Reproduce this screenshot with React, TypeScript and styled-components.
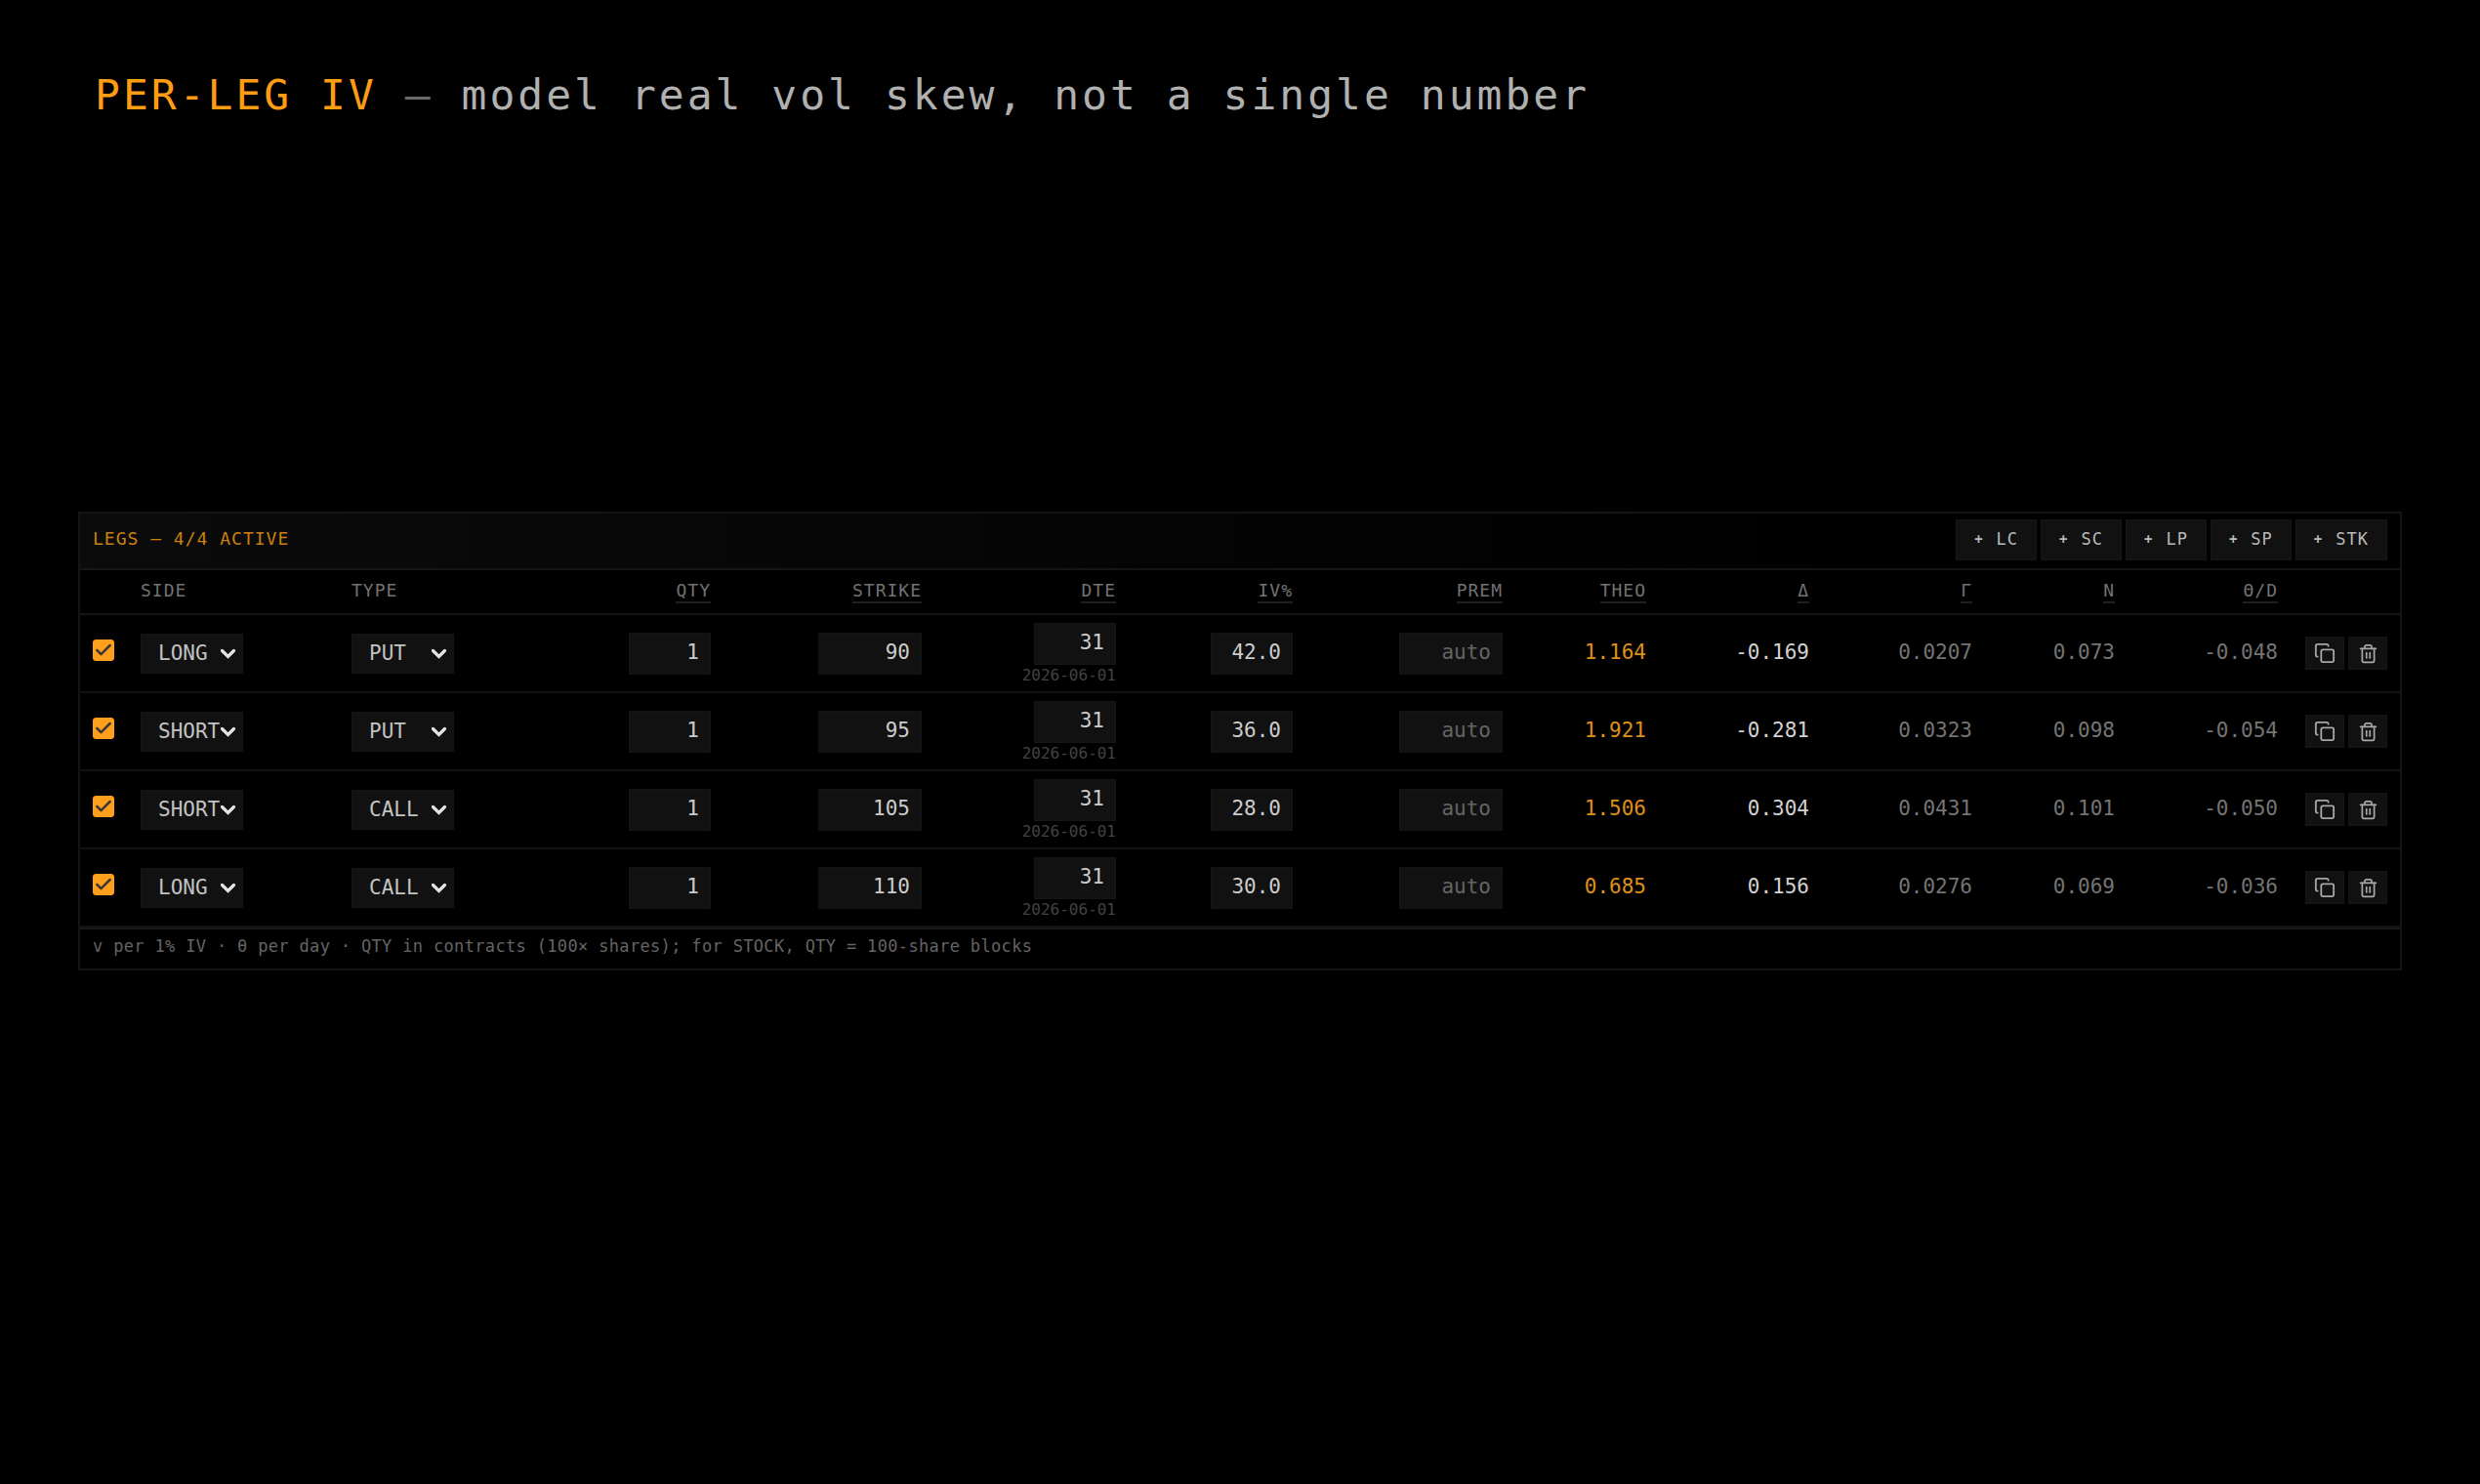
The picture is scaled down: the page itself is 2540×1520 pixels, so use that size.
import React, { useState } from "react";
import styled, { createGlobalStyle } from "styled-components";
import { Check, Copy, Trash2 } from "lucide-react";

const mono = `"DejaVu Sans Mono", "Liberation Mono", monospace`;

const GlobalStyle = createGlobalStyle`
  *, *::before, *::after { box-sizing: border-box; }
  body { margin: 0; background: #000; color: #c8c8c8; font-family: ${mono}; }
  button, input, select { font-family: inherit; margin: 0; }
`;

const Page = styled.div`
  min-height: 100vh;
  display: grid;
  grid-template-rows: 144px 1fr 146px;
  grid-template-columns: minmax(0, 1fr);
  padding: 0 80px;
`;

const Title = styled.h1`
  margin: 0;
  padding: 65px 17px 0;
  font-size: 43px;
  line-height: 64px;
  font-weight: 400;
  letter-spacing: 3px;
  color: #b0b0b0;
`;

const Accent = styled.span`
  color: #ff9d12;
`;

const Dash = styled.span`
  color: #6c6c6c;
`;

const Main = styled.main`
  align-self: center;
`;

const Panel = styled.section`
  border: 2px solid #141414;
`;

const PanelHead = styled.header`
  display: flex;
  align-items: center;
  justify-content: space-between;
  padding: 6px 13px 8px;
  border-bottom: 2px solid #151515;
  background: linear-gradient(90deg, #0b0b0b, #000 75%);
`;

const PanelTitle = styled.h2`
  margin: 0;
  font-size: 18px;
  line-height: 22px;
  padding-bottom: 2px;
  font-weight: 400;
  letter-spacing: 1px;
  color: #cc8011;
`;

const AddGroup = styled.div`
  display: flex;
  gap: 4px;
`;

const AddButton = styled.button`
  display: flex;
  align-items: center;
  gap: 13px;
  height: 42px;
  padding: 0 18px 2px;
  border: 1px solid #161616;
  background: #111;
  color: #bababa;
  font-size: 17px;
  line-height: 20px;
  letter-spacing: 1px;
  cursor: pointer;
`;

const Plus = styled.span`
  font-size: 14px;
  font-weight: 700;
`;

const Table = styled.table`
  width: 100%;
  table-layout: fixed;
  border-collapse: separate;
  border-spacing: 0;
`;

const Col = styled.col<{ $share: number }>`
  width: ${(p) => p.$share}%;
`;

const HeadCell = styled.th<{ $left?: boolean }>`
  height: 46px;
  padding: 10px 12px 0;
  vertical-align: top;
  text-align: ${(p) => (p.$left ? "left" : "right")};
  border-bottom: 2px solid #141414;
  font-size: 18px;
  line-height: 22px;
  font-weight: 400;
  letter-spacing: 1px;
  color: #727272;
`;

const Term = styled.abbr`
  display: inline-block;
  text-decoration: none;
  border-bottom: 2px solid #202020;
`;

const Cell = styled.td<{ $right?: boolean }>`
  height: 80px;
  padding: 0 12px;
  vertical-align: middle;
  text-align: ${(p) => (p.$right ? "right" : "left")};
  border-bottom: 2px solid #121212;

  &:first-child { padding: 0 13px; }
  &:last-child { padding: 0 13px; }
`;

const tones = { theo: "#df9018", strong: "#d2d2d2", dim: "#747474" };

const ValueCell = styled(Cell)<{ $tone: keyof typeof tones }>`
  padding-bottom: 3px;
  font-size: 21px;
  line-height: 26px;
  color: ${(p) => tones[p.$tone]};
`;

const Tick = styled.span`
  position: relative;
  display: block;
  width: 22px;
  height: 22px;
  margin-bottom: 7px;

  svg {
    position: absolute;
    inset: 1px;
    pointer-events: none;
  }
`;

const TickInput = styled.input`
  appearance: none;
  display: block;
  width: 22px;
  height: 22px;
  border-radius: 3px;
  border: 1px solid #ff9f1c;
  background: #111;

  &:checked { background: #ff9f1c; }
  &:not(:checked) + svg { display: none; }
`;

const SelectWrap = styled.span`
  position: relative;
  display: block;
  width: 105px;

  svg {
    position: absolute;
    right: 7px;
    top: 15px;
    pointer-events: none;
  }
`;

const Select = styled.select`
  appearance: none;
  display: block;
  width: 100%;
  height: 41px;
  padding: 0 0 0 17px;
  border: 1px solid #151515;
  border-radius: 0;
  background: #111;
  color: #c2c2c2;
  font-size: 21px;
  line-height: 26px;
`;

const Field = styled.input<{ $wide?: boolean }>`
  display: block;
  width: ${(p) => (p.$wide ? 106 : 84)}px;
  height: 43px;
  margin-left: auto;
  padding: 0 11px 3px;
  border: 1px solid #151515;
  border-radius: 0;
  background: #111;
  color: #cccccc;
  font-size: 21px;
  line-height: 26px;
  text-align: right;

  &::placeholder { color: #646464; opacity: 1; }
`;

const Expiry = styled.time`
  display: block;
  margin-top: 2px;
  font-size: 16px;
  line-height: 18px;
  color: #424242;
`;

const Actions = styled.div`
  display: flex;
  justify-content: flex-end;
  gap: 4px;
`;

const IconButton = styled.button`
  display: grid;
  place-items: center;
  width: 40px;
  height: 34px;
  padding: 0;
  border: 1px solid #151515;
  background: #111;
  color: #a6a6a6;
  cursor: pointer;
`;

const Footnote = styled.p`
  margin: 0;
  padding: 6px 13px 12px;
  border-top: 2px solid #191919;
  font-size: 17px;
  line-height: 22px;
  letter-spacing: 0.02em;
  color: #646464;
`;

const columns = [
  { label: "", width: 50 },
  { label: "SIDE", width: 216, left: true },
  { label: "TYPE", width: 216, left: true },
  { label: "QTY", width: 176, title: "Contracts" },
  { label: "STRIKE", width: 216, title: "Strike price" },
  { label: "DTE", width: 199, title: "Days to expiry" },
  { label: "IV%", width: 181, title: "Implied volatility" },
  { label: "PREM", width: 215, title: "Premium" },
  { label: "THEO", width: 147, title: "Theoretical value" },
  { label: "Δ", width: 167, title: "Delta" },
  { label: "Γ", width: 167, title: "Gamma" },
  { label: "N", width: 146, title: "Vega" },
  { label: "Θ/D", width: 167, title: "Theta per day" },
  { label: "", width: 113 },
];
const totalWidth = columns.reduce((sum, c) => sum + c.width, 0);

const legs = [
  { side: "LONG", type: "PUT", strike: "90", iv: "42.0", theo: "1.164", delta: "-0.169", gamma: "0.0207", vega: "0.073", theta: "-0.048" },
  { side: "SHORT", type: "PUT", strike: "95", iv: "36.0", theo: "1.921", delta: "-0.281", gamma: "0.0323", vega: "0.098", theta: "-0.054" },
  { side: "SHORT", type: "CALL", strike: "105", iv: "28.0", theo: "1.506", delta: "0.304", gamma: "0.0431", vega: "0.101", theta: "-0.050" },
  { side: "LONG", type: "CALL", strike: "110", iv: "30.0", theo: "0.685", delta: "0.156", gamma: "0.0276", vega: "0.069", theta: "-0.036" },
];

function Dropdown({ label, value, options }: { label: string; value: string; options: string[] }) {
  return (
    <SelectWrap>
      <Select aria-label={label} defaultValue={value}>
        {options.map((o) => (
          <option key={o}>{o}</option>
        ))}
      </Select>
      <svg width="17" height="12" viewBox="0 0 17 12" fill="none" aria-hidden="true">
        <path d="M2.5 2.5 8.5 8.5 14.5 2.5" stroke="#e4e4e4" strokeWidth="3.2" strokeLinecap="round" />
      </svg>
    </SelectWrap>
  );
}

function LegRow({ leg, index, active, onToggle }: {
  leg: (typeof legs)[number];
  index: number;
  active: boolean;
  onToggle: () => void;
}) {
  const name = `Leg ${index + 1}`;
  return (
    <tr>
      <Cell>
        <Tick>
          <TickInput type="checkbox" aria-label={`${name} active`} checked={active} onChange={onToggle} />
          <Check size={20} strokeWidth={3} color="#3c3a38" />
        </Tick>
      </Cell>
      <Cell><Dropdown label={`${name} side`} value={leg.side} options={["LONG", "SHORT"]} /></Cell>
      <Cell><Dropdown label={`${name} type`} value={leg.type} options={["CALL", "PUT", "STOCK"]} /></Cell>
      <Cell $right><Field aria-label={`${name} quantity`} defaultValue="1" inputMode="numeric" /></Cell>
      <Cell $right><Field $wide aria-label={`${name} strike`} defaultValue={leg.strike} inputMode="decimal" /></Cell>
      <Cell $right>
        <Field aria-label={`${name} days to expiry`} defaultValue="31" inputMode="numeric" />
        <Expiry dateTime="2026-06-01">2026-06-01</Expiry>
      </Cell>
      <Cell $right><Field aria-label={`${name} implied volatility`} defaultValue={leg.iv} inputMode="decimal" /></Cell>
      <Cell $right><Field $wide aria-label={`${name} premium`} placeholder="auto" inputMode="decimal" /></Cell>
      <ValueCell $right $tone="theo">{leg.theo}</ValueCell>
      <ValueCell $right $tone="strong">{leg.delta}</ValueCell>
      <ValueCell $right $tone="dim">{leg.gamma}</ValueCell>
      <ValueCell $right $tone="dim">{leg.vega}</ValueCell>
      <ValueCell $right $tone="dim">{leg.theta}</ValueCell>
      <Cell>
        <Actions>
          <IconButton type="button" aria-label={`Duplicate ${name}`}><Copy size={22} /></IconButton>
          <IconButton type="button" aria-label={`Delete ${name}`}><Trash2 size={21} /></IconButton>
        </Actions>
      </Cell>
    </tr>
  );
}

export default function App() {
  const [active, setActive] = useState(legs.map(() => true));
  const toggle = (i: number) => setActive((list) => list.map((on, n) => (n === i ? !on : on)));

  return (
    <>
      <GlobalStyle />
      <Page>
        <Title>
          <Accent>PER-LEG IV</Accent> <Dash>—</Dash> model real vol skew, not a single number
        </Title>
        <Main>
          <Panel>
            <PanelHead>
              <PanelTitle>{`LEGS — ${active.filter(Boolean).length}/${legs.length} ACTIVE`}</PanelTitle>
              <AddGroup>
                {["LC", "SC", "LP", "SP", "STK"].map((kind) => (
                  <AddButton key={kind} type="button"><Plus>+</Plus>{kind}</AddButton>
                ))}
              </AddGroup>
            </PanelHead>
            <Table>
              <colgroup>
                {columns.map((c, i) => (
                  <Col key={i} $share={(c.width / totalWidth) * 100} />
                ))}
              </colgroup>
              <thead>
                <tr>
                  {columns.map((c, i) => (
                    <HeadCell key={i} scope="col" $left={c.left}>
                      {c.title ? <Term title={c.title}>{c.label}</Term> : c.label}
                    </HeadCell>
                  ))}
                </tr>
              </thead>
              <tbody>
                {legs.map((leg, i) => (
                  <LegRow key={i} leg={leg} index={i} active={active[i]} onToggle={() => toggle(i)} />
                ))}
              </tbody>
            </Table>
            <Footnote>v per 1% IV · θ per day · QTY in contracts (100× shares); for STOCK, QTY = 100-share blocks</Footnote>
          </Panel>
        </Main>
      </Page>
    </>
  );
}
